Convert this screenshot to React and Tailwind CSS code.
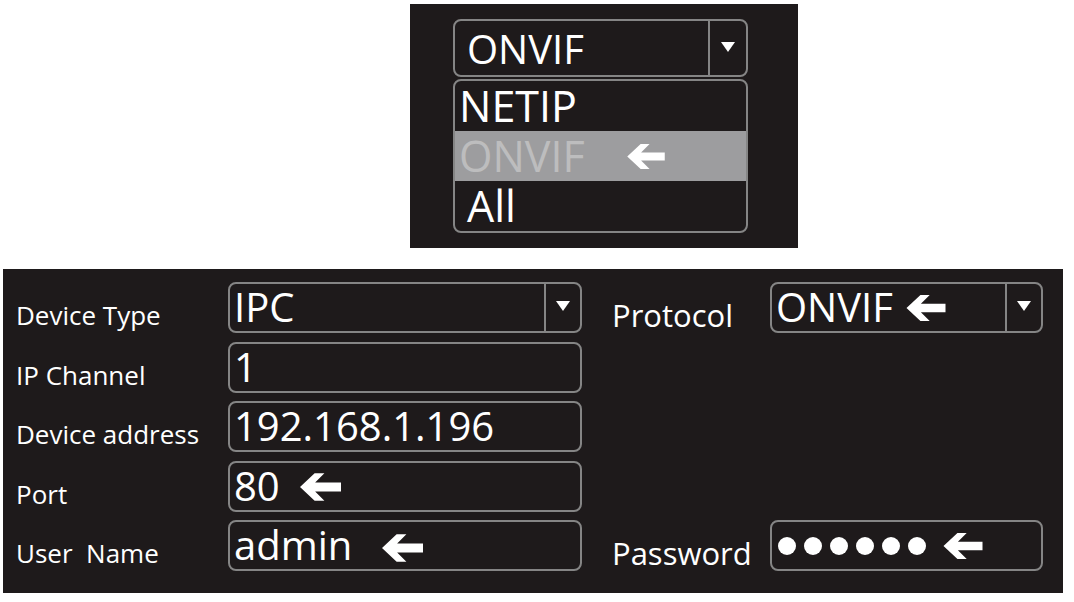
import React from 'react';

const font = { fontFamily: '"Open Sans", "Noto Sans", sans-serif' };

function Arrow({ className = '' }) {
  return (
    <svg viewBox="0 0 42 28" className={className} fill="#ffffff">
      <polygon points="0,14 15,0 25,0 15.5,9.5 42,9.5 42,18.5 15.5,18.5 25,28 15,28" />
    </svg>
  );
}

function Caret() {
  return (
    <svg viewBox="0 0 14 10" className="w-[14px] h-[10px]" fill="#ffffff">
      <polygon points="0,0 14,0 7,10" />
    </svg>
  );
}

function Field({ children, width = 'w-[354px]', select = false }) {
  return (
    <div className={`${width} h-[51px] border-2 border-[#858585] rounded-[8px] flex items-stretch`}>
      <div className="flex-1 flex items-start pl-[4px] text-[40px] leading-[46px] text-white whitespace-nowrap">
        {children}
      </div>
      {select && (
        <div className="w-[36px] border-l-2 border-[#858585] flex items-center justify-center pb-[4px]">
          <Caret />
        </div>
      )}
    </div>
  );
}

function Label({ children, width = 'w-[212px]', big = false }) {
  return (
    <div
      className={
        big
          ? `${width} pt-[13px] text-[31px] leading-[40px] text-white whitespace-pre`
          : `${width} pt-[16px] text-[26px] leading-[34px] text-white whitespace-pre`
      }
    >
      {children}
    </div>
  );
}

const rows = [
  {
    label: 'Device Type',
    value: 'IPC',
    select: true,
    right: { label: 'Protocol', value: <>ONVIF<Arrow className="w-[42px] h-[26px] ml-[12px] mt-[11px]" /></> },
  },
  { label: 'IP Channel', value: '1' },
  { label: 'Device address', value: '192.168.1.196' },
  { label: 'Port', value: <>80<Arrow className="w-[41px] h-[28px] ml-[20px] mt-[10px]" /></> },
  {
    label: 'User  Name',
    value: <>admin<Arrow className="w-[41px] h-[28px] ml-[30px] mt-[12px]" /></>,
    right: { label: 'Password', password: true },
  },
];

export default function App() {
  return (
    <div className="w-[1074px] h-[602px] bg-white overflow-hidden flex flex-col" style={font}>
      {/* protocol dropdown */}
      <div className="ml-[410px] mt-[4px] w-[388px] h-[244px] bg-[#1e1a1b] pl-[43px] pt-[15px]">
        <div className="w-[295px] h-[58px] border-2 border-[#858585] rounded-[8px] flex items-stretch">
          <div className="flex-1 pl-[12px] pt-[5px] text-[40px] leading-[46px] text-white">ONVIF</div>
          <div className="w-[38px] border-l-2 border-[#858585] flex items-center justify-center pb-[2px]">
            <Caret />
          </div>
        </div>
        <div className="mt-[2px] w-[295px] h-[154px] border-2 border-[#858585] rounded-[8px] flex flex-col text-[43px] leading-[50px]">
          <div className="h-[50px] shrink-0 pl-[4px] text-white">NETIP</div>
          <div className="h-[50px] shrink-0 bg-[#9d9d9f] pl-[4px] text-[#bdbdbe] flex items-start">
            ONVIF
            <Arrow className="w-[42px] h-[25px] ml-[40px] mt-[13px]" />
          </div>
          <div className="h-[50px] shrink-0 pl-[12px] text-white">All</div>
        </div>
      </div>

      {/* add device form */}
      <div className="ml-[3px] mt-[21px] w-[1060px] h-[324px] bg-[#1e1a1b] pl-[13px] pt-[13px] flex flex-col gap-[8.5px]">
        {rows.map((r) => (
          <div key={r.label} className="flex h-[51px] shrink-0">
            <Label>{r.label}</Label>
            <Field select={r.select}>{r.value}</Field>
            {r.right && (
              <>
                <div className="w-[30px]" />
                <Label width="w-[158px]" big>
                  {r.right.label}
                </Label>
                {r.right.password ? (
                  <div className="w-[273px] h-[51px] border-2 border-[#858585] rounded-[8px] flex items-center pl-[6px]">
                    <div className="flex gap-[8px]">
                      {[0, 1, 2, 3, 4, 5].map((i) => (
                        <span key={i} className="w-[18px] h-[18px] rounded-full bg-white" />
                      ))}
                    </div>
                    <Arrow className="w-[42px] h-[26px] ml-[16px]" />
                  </div>
                ) : (
                  <Field width="w-[273px]" select>
                    {r.right.value}
                  </Field>
                )}
              </>
            )}
          </div>
        ))}
      </div>
    </div>
  );
}
